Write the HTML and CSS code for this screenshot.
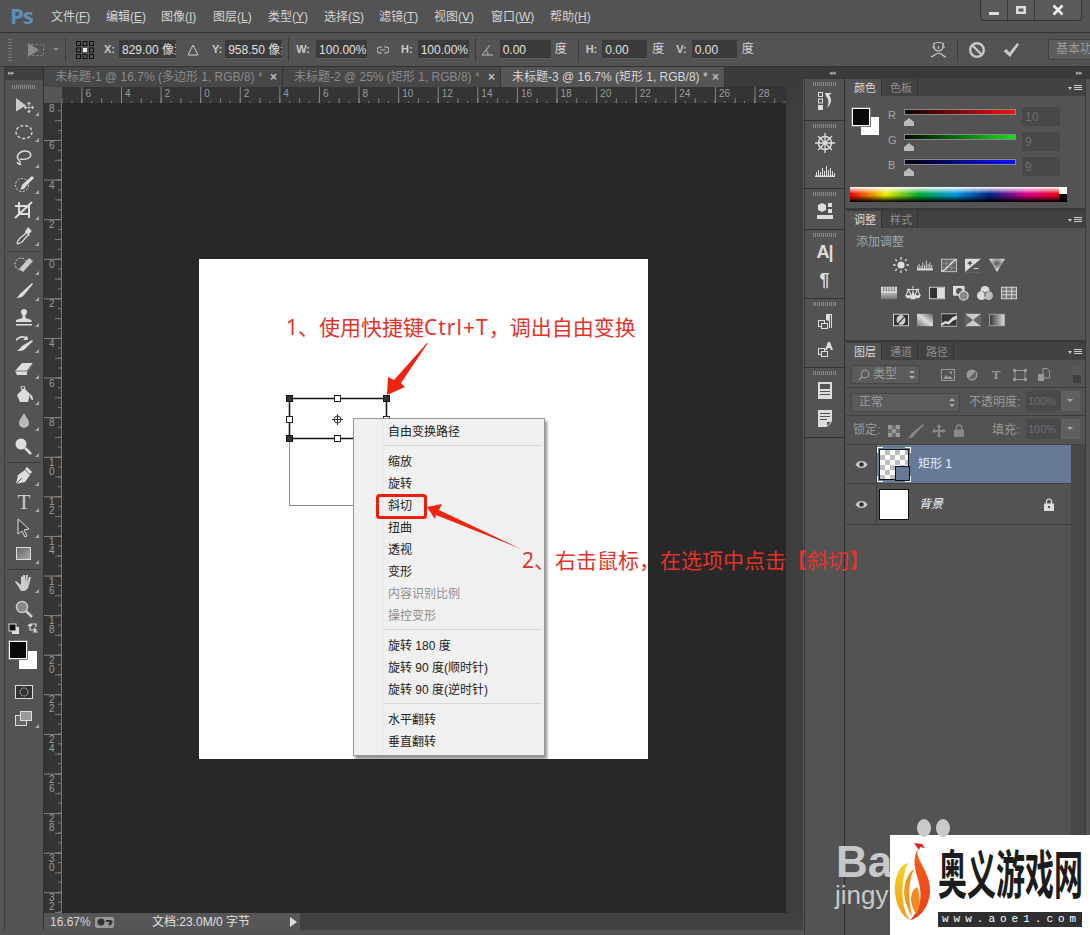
FILE: index.html
```html
<!DOCTYPE html>
<html lang="zh-CN">
<head>
<meta charset="utf-8">
<title>Photoshop</title>
<link rel="stylesheet" href="styles.css">
</head>
<body>
<div class="app">
  <header class="titlebar">
    <div class="logo">Ps</div>
    <nav class="menu">
      <span>文件(<u>F</u>)</span><span>编辑(<u>E</u>)</span><span>图像(<u>I</u>)</span><span>图层(<u>L</u>)</span><span>类型(<u>Y</u>)</span><span>选择(<u>S</u>)</span><span>滤镜(<u>T</u>)</span><span>视图(<u>V</u>)</span><span>窗口(<u>W</u>)</span><span>帮助(<u>H</u>)</span>
    </nav>
    <div class="winbtns">
      <div class="winbtn"><svg width="12" height="12" viewBox="0 0 12 12"><rect x="1" y="8" width="10" height="3" fill="#ddd"/></svg></div>
      <div class="winbtn"><svg width="12" height="12" viewBox="0 0 12 12"><path d="M1 2h10v8H1zM3.500 4.500v3h5v-3z" fill="#ddd" fill-rule="evenodd"/></svg></div>
      <div class="winbtn wide"><svg width="12" height="12" viewBox="0 0 12 12"><path d="M1.500 1.500l9 9M10.500 1.500l-9 9" stroke="#eee" stroke-width="2.600"/></svg></div>
    </div>
  </header>

  <div class="options">
    <div class="grip"></div>
    <svg class="o-tool" width="18" height="16" viewBox="0 0 18 16"><path d="M1 1l11 7-11 7z" fill="#8a8a8a"/><rect x="4.500" y="2.500" width="12" height="11" fill="none" stroke="#8a8a8a" stroke-dasharray="2 2"/></svg>
    <span class="caret"></span>
    <div class="vsep s1"></div>
    <svg class="o-grid" width="20" height="20" viewBox="0 0 20 20"><g fill="none" stroke="#111"><rect x="1.500" y="1.500" width="4" height="4"/><rect x="8" y="1.500" width="4" height="4"/><rect x="14.500" y="1.500" width="4" height="4"/><rect x="1.500" y="8" width="4" height="4"/><rect x="14.500" y="8" width="4" height="4"/><rect x="1.500" y="14.500" width="4" height="4"/><rect x="8" y="14.500" width="4" height="4"/><rect x="14.500" y="14.500" width="4" height="4"/></g><rect x="8" y="8" width="4" height="4" fill="#eee"/></svg>
    <b class="lab l-x">X:</b><span class="inp w57 m-inp">829.00 像素</span>
    <svg class="o-tri" width="12" height="12" viewBox="0 0 12 12"><path d="M6 1l5 10H1z" fill="none" stroke="#ccc"/></svg>
    <b class="lab l-y">Y:</b><span class="inp w57 m-inpy">958.50 像素</span>
    <div class="vsep s2"></div>
    <b class="lab l-w">W:</b><span class="inp w51 m-inp2">100.00%</span>
    <svg class="o-link" width="12" height="8" viewBox="0 0 12 8"><path d="M5 1H3a3 3 0 0 0 0 6h2M7 1h2a3 3 0 0 1 0 6H7M3.500 4h5" fill="none" stroke="#bbb" stroke-width="1.200"/></svg>
    <b class="lab l-h">H:</b><span class="inp w51 m-inp3">100.00%</span>
    <div class="vsep s3"></div>
    <svg class="o-ang" width="13" height="12" viewBox="0 0 13 12"><path d="M1 11h11M1 11L9 1M7 11a6 6 0 0 0-2-5" fill="none" stroke="#bbb"/></svg>
    <span class="inp w51 m-inp4">0.00</span>
    <span class="deg d1">度</span>
    <div class="vsep s4"></div>
    <b class="lab l-h2">H:</b><span class="inp w45 m-inp5">0.00</span>
    <span class="deg d2">度</span>
    <b class="lab l-v">V:</b><span class="inp w45 m-inp6">0.00</span>
    <span class="deg d2">度</span>
    <div class="o-right">
      <svg width="17" height="18" viewBox="0 0 17 18"><path d="M3 3c2-2 9-2 11 0M4 3v3c0 2 2 4 4.500 4S13 8 13 6V3M2 6h3M12 6h3M8.500 5v3M1 16c3-1 5-4 7.500-4s4.500 3 7.500 4" fill="none" stroke="#ccc" stroke-width="1.200"/></svg>
      <div class="vsep s5"></div>
      <svg class="o-cancel" width="18" height="18" viewBox="0 0 18 18"><circle cx="9" cy="9" r="6.800" fill="none" stroke="#c8c8c8" stroke-width="2.400"/><path d="M4.500 4.500l9 9" stroke="#c8c8c8" stroke-width="2.400"/></svg>
      <svg class="o-ok" width="18" height="16" viewBox="0 0 18 16"><path d="M1.500 9l3-2 3 3.500L15 1l2 1.500L8 15z" fill="#c8c8c8"/></svg>
      <div class="workspace-btn">基本功能</div>
    </div>
  </div>

  <div class="work">
    <aside class="tools">
      <div class="collapse"><span class="arrows-mini">▸▸</span></div>
      <div class="handle"></div>
      <div class="tool more"><svg width="22" height="18" viewBox="0 0 22 18"><path d="M3 1l10 7.500-10 6z" fill="#ccc"/><path d="M16 6v9M11.500 10.500h9M16 5l-1.500 2h3zM16 16l-1.500-2h3zM11 10.500l2-1.500v3zM21 10.500l-2-1.500v3z" fill="#ccc" stroke="#ccc" stroke-width=".7"/></svg></div>
      <div class="tool more"><svg width="20" height="18" viewBox="0 0 20 18"><ellipse cx="10" cy="9" rx="8" ry="6.500" fill="none" stroke="#ddd" stroke-width="1.300" stroke-dasharray="3 2"/></svg></div>
      <div class="tool more"><svg width="20" height="18" viewBox="0 0 20 18"><path d="M5 15c2-1 1-3-1-5C2 7 5 2 11 2c5 0 7 3 5 6-2 2-7 3-10 2M3 13c1 2 3 3 4 2" fill="none" stroke="#ddd" stroke-width="1.400"/></svg></div>
      <div class="tool more"><svg width="20" height="18" viewBox="0 0 20 18"><circle cx="8" cy="10" r="6.500" fill="none" stroke="#ddd" stroke-dasharray="2 1.600"/><path d="M18 1l2 2-8 8c-1 3-4 4-6 3 2-1 1-3 3-5z" fill="#ddd"/></svg></div>
      <div class="tool more"><svg width="20" height="18" viewBox="0 0 20 18"><path d="M5 1v12h11M1 5h14v12M1 17L18 1" fill="none" stroke="#ddd" stroke-width="2"/></svg></div>
      <div class="tool more"><svg width="20" height="18" viewBox="0 0 20 18"><path d="M14 1l3 3-3 3 1 1-2 1-5 6-4 2-1-1 2-4 6-5 1-2 1 1z" fill="none" stroke="#ddd" stroke-width="1.200"/><path d="M14 1l3 3-3 3-3-3z" fill="#ddd"/></svg></div>
      <div class="toolsep"></div>
      <div class="tool more"><svg width="20" height="18" viewBox="0 0 20 18"><circle cx="7" cy="8" r="6" fill="none" stroke="#ddd" stroke-dasharray="2 1.600"/><path d="M5 13L15 2l4 3-10 11z" fill="#c8c8c8"/></svg></div>
      <div class="tool more"><svg width="20" height="18" viewBox="0 0 20 18"><path d="M18 1l1 1-9 11c-1 2-4 3-8 3 3-1 3-4 5-5z" fill="#ddd"/></svg></div>
      <div class="tool more"><svg width="20" height="18" viewBox="0 0 20 18"><circle cx="10" cy="4" r="3" fill="#ddd"/><path d="M8.500 6h3v4l6 2v2H2v-2l6.500-2zM2 16h16v1.500H2z" fill="#ddd"/></svg></div>
      <div class="tool more"><svg width="20" height="18" viewBox="0 0 20 18"><path d="M2 5c3-3 7-4 10-2l1-2 1 5-5 0 2-2c-3-1-6 0-9 3z" fill="#ddd"/><path d="M18 6l1 1-8 8c-2 2-5 2-8 2 2-1 3-3 5-5z" fill="#ddd"/></svg></div>
      <div class="tool more"><svg width="20" height="18" viewBox="0 0 20 18"><path d="M8 3h11l-6 9v3H3L1 11z" fill="#ddd"/><path d="M1 11h12l6-8" fill="none" stroke="#777"/></svg></div>
      <div class="tool more"><svg width="20" height="18" viewBox="0 0 20 18"><path d="M3 9l7-7 6 6-2 8H6z" fill="#ddd"/><circle cx="9" cy="2" r="2" fill="none" stroke="#ddd"/><path d="M16 8c2 1 3 3 3 6-2 0-3-2-3-6z" fill="#ddd"/></svg></div>
      <div class="tool more"><svg width="20" height="18" viewBox="0 0 20 18"><path d="M10 1c2 4 5 7 5 10a5 5 0 0 1-10 0c0-3 3-6 5-10z" fill="#bbb"/></svg></div>
      <div class="tool more"><svg width="20" height="18" viewBox="0 0 20 18"><circle cx="7" cy="6" r="5.500" fill="#ddd"/><path d="M11 10l6 6" stroke="#ddd" stroke-width="2.500"/></svg></div>
      <div class="toolsep"></div>
      <div class="tool more"><svg width="20" height="18" viewBox="0 0 20 18"><path d="M2 17l2-9 7-5 5 5-5 7z" fill="#ddd"/><path d="M2 17l6-6" stroke="#555"/><path d="M12 1l5 5" stroke="#ddd" stroke-width="3"/></svg></div>
      <div class="tool more"><span class="t-glyph">T</span></div>
      <div class="tool more"><svg width="20" height="20" viewBox="0 0 20 20"><path d="M4 1l11 10-5 1 3 6-2 1-3-6-4 3z" fill="#444" stroke="#ddd"/></svg></div>
      <div class="tool more"><svg width="16" height="14" viewBox="0 0 16 14"><defs><linearGradient id="rg" x1="0" y1="0" x2="1" y2="1"><stop offset="0" stop-color="#666"/><stop offset="1" stop-color="#aaa"/></linearGradient></defs><rect x=".5" y=".5" width="14" height="12" fill="url(#rg)" stroke="#ddd"/></svg></div>
      <div class="toolsep"></div>
      <div class="tool more"><svg width="20" height="18" viewBox="0 0 20 18"><path d="M2 7l5 4V3l1-1 1 1v5-7h2v7l1-7h2l-1 8 2-6h2l-2 8c-1 4-3 6-6 6S6 15 4 12L1 8z" fill="#ccc"/></svg></div>
      <div class="tool"><svg width="20" height="18" viewBox="0 0 20 18"><circle cx="8" cy="7" r="5.500" fill="#888" stroke="#ccc" stroke-width="1.400"/><path d="M12 11l6 6" stroke="#ccc" stroke-width="2.500"/></svg></div>
      <div class="miniswap">
        <svg width="12" height="12" viewBox="0 0 12 12"><rect x="4" y="4" width="7" height="7" fill="#ddd"/><rect x="1" y="1" width="7" height="7" fill="#111" stroke="#ddd"/></svg>
        <svg width="12" height="12" viewBox="0 0 12 12"><path d="M3 1v6h6M1 3l2-2 2 2M7 5l2 2-2 2M4 1h5v3M11 9H6" fill="none" stroke="#ddd" stroke-width="1.200"/></svg>
      </div>
      <div class="swatch tool-swatch"><span class="bg"></span><span class="fg"></span></div>
      <div class="tool mask"><svg width="18" height="14" viewBox="0 0 18 14"><rect x=".5" y=".5" width="17" height="13" fill="#333" stroke="#ddd"/><circle cx="9" cy="7" r="4" fill="none" stroke="#ddd" stroke-dasharray="1.500 1"/></svg></div>
      <div class="tool more"><svg width="20" height="16" viewBox="0 0 20 16"><rect x="1.500" y="5.500" width="11" height="10" fill="#666" stroke="#ddd"/><rect x="6.500" y="1.500" width="11" height="9" fill="#999" stroke="#ddd"/></svg></div>
    </aside>

    <main class="docarea">
      <div class="tabs">
        <div class="tab t1"><span>未标题-1 @ 16.7% (多边形 1, RGB/8) *</span><i>×</i></div>
        <div class="tab t2"><span>未标题-2 @ 25% (矩形 1, RGB/8) *</span><i>×</i></div>
        <div class="tab t3 active"><span>未标题-3 @ 16.7% (矩形 1, RGB/8) *</span><i>×</i></div>
      </div>
      <div class="rulerrow">
        <div class="corner"></div>
        <div class="ruler-h">
          <span>6</span><span>4</span><span>2</span><span>0</span><span>2</span><span>4</span><span>6</span><span>8</span><span>10</span><span>12</span><span>14</span><span>16</span><span>18</span><span>20</span><span>22</span><span>24</span><span>26</span><span>28</span>
        </div>
        <div class="rulergap"></div>
      </div>
      <div class="mainrow">
        <div class="ruler-v">
          <span>8</span><span>6</span><span>4</span><span>2</span><span>0</span><span>2</span><span>4</span><span>6</span><span>8</span><span>1<br>0</span><span>1<br>2</span><span>1<br>4</span><span>1<br>6</span><span>1<br>8</span><span>2<br>0</span><span>2<br>2</span><span>2<br>4</span><span>2<br>6</span><span>2<br>8</span><span>3<br>0</span><span>3<br>2</span>
        </div>
        <div class="viewport">
          <div class="page"></div>
          <svg class="overlay" viewBox="62 103 724 810" width="724" height="810">
            <path d="M289.500 438v67.500h100" fill="none" stroke="#888" stroke-width="1"/>
            <path d="M289.500 398.500h97v40h-97z" fill="none" stroke="#111" stroke-width="1.500"/>
            <g fill="#333" stroke="#111"><rect x="286.500" y="395.500" width="6" height="6"/><rect x="383.500" y="395.500" width="6" height="6"/><rect x="286.500" y="435.500" width="6" height="6"/></g>
            <g fill="#fff" stroke="#222"><rect x="334.500" y="395.500" width="6" height="6"/><rect x="334.500" y="435.500" width="6" height="6"/><rect x="286.500" y="416.500" width="6" height="6"/><rect x="383.500" y="416.500" width="6" height="6"/></g>
            <g fill="none" stroke="#333"><circle cx="337.500" cy="419.500" r="3.500"/><path d="M337.500 414v11M332 419.500h11"/></g>
          </svg>
          <div class="ctxmenu">
            <div class="mi">自由变换路径</div>
            <div class="ms"></div>
            <div class="mi">缩放</div>
            <div class="mi">旋转</div>
            <div class="mi">斜切</div>
            <div class="mi">扭曲</div>
            <div class="mi">透视</div>
            <div class="mi">变形</div>
            <div class="mi off">内容识别比例</div>
            <div class="mi off">操控变形</div>
            <div class="ms"></div>
            <div class="mi">旋转 180 度</div>
            <div class="mi">旋转 90 度(顺时针)</div>
            <div class="mi">旋转 90 度(逆时针)</div>
            <div class="ms"></div>
            <div class="mi">水平翻转</div>
            <div class="mi">垂直翻转</div>
          </div>
          <svg class="overlay" viewBox="62 103 724 810" width="724" height="810">
            <g fill="#f0240f">
              <path d="M428 343L401 383l4 4-18 8 1-18 6 3 33-37z"/>
              <path d="M427 507l15-3-3 6 82 39-85-34-1 4z"/>
            </g>
            <rect x="377.500" y="495.500" width="48" height="22" rx="2" fill="none" stroke="#ee1c0c" stroke-width="3"/>
          </svg>
        </div>
        <div class="vscroll"></div>
      </div>
      <div class="statusrow">
        <div class="status">
          <span class="zoomval">16.67%</span>
          <span class="st-ico"><svg width="18" height="10" viewBox="0 0 18 10"><circle cx="5" cy="5" r="3.500" fill="#333"/><path d="M10 3h5l2 2-3 4-2-2 2-2h-4z" fill="#333"/></svg></span>
          <span class="docinfo">文档:23.0M/0 字节</span>
          <span class="st-play"></span>
        </div>
        <div class="hscroll"></div>
      </div>
    </main>

    <div class="dockwrap">
      <div class="dockhead"><span>◂◂</span><span>▸▸</span></div>
      <div class="dockbody">
        <div class="dock">
          <div class="dg g1"><div class="handle sm"></div>
            <div class="di"><svg width="16" height="20" viewBox="0 0 16 20"><g fill="none" stroke="#ddd"><rect x="1.500" y="1.500" width="4" height="4"/><rect x="1.500" y="8" width="4" height="4"/></g><rect x="1" y="14" width="5" height="5" fill="#ddd"/><path d="M8 2h7l-3 2c3 4 3 8-2 13 2-5 2-9-1-12z" fill="#ddd"/></svg></div>
          </div>
          <div class="dg g2"><div class="handle sm"></div>
            <div class="di"><svg width="20" height="20" viewBox="0 0 20 20"><circle cx="10" cy="10" r="6.500" fill="none" stroke="#ddd" stroke-width="1.500"/><path d="M10 0v20M0 10h20M3 3l14 14M17 3L3 17" stroke="#ddd" stroke-width="1.300"/></svg></div>
            <div class="di"><svg width="20" height="12" viewBox="0 0 20 12"><path d="M1.500 12V7M3.500 12V5M5.500 12V7M7.500 12V3M9.500 12V6M11.500 12V1M13.500 12V5M15.500 12V3M17.500 12V6M19.500 12V8" stroke="#ddd"/><path d="M0 10.500h20V12H0z" fill="#ddd"/></svg></div>
          </div>
          <div class="dg g3"><div class="handle sm"></div>
            <div class="di"><svg width="16" height="18" viewBox="0 0 16 18"><path d="M1 3l4-2 4 2v5l-4 2-4-2z" fill="#ddd"/><rect x="11" y="1" width="4" height="4" fill="#ddd"/><rect x="11" y="7" width="4" height="4" fill="#ddd"/><rect y="13" width="16" height="4" fill="#ddd"/></svg></div>
          </div>
          <div class="dg g4"><div class="handle sm"></div>
            <div class="di"><span class="a-glyph">A|</span></div>
            <div class="di"><span class="p-glyph">¶</span></div>
          </div>
          <div class="dg g5"><div class="handle sm"></div>
            <div class="di"><span class="combo"><svg width="16" height="16" viewBox="0 0 16 16"><rect x="1.500" y="7.500" width="6" height="6" fill="none" stroke="#ddd"/><rect x="4.500" y="10.500" width="6" height="5" fill="#555" stroke="#ddd"/><path d="M9 7V1h6v14h-1V2h-1v13h-1V8z" fill="#ddd"/></svg></span></div>
            <div class="di"><svg width="16" height="16" viewBox="0 0 16 16"><rect x="1.500" y="7.500" width="6" height="6" fill="none" stroke="#ddd"/><rect x="4.500" y="10.500" width="6" height="5" fill="#555" stroke="#ddd"/><path d="M8 9l3-8h2l3 8h-2l-1-2h-2l-1 2z" fill="#ddd"/></svg></div>
          </div>
          <div class="dg g6"><div class="handle sm"></div>
            <div class="di"><svg width="14" height="17" viewBox="0 0 14 17"><path d="M0 0h14v17H0zM2 2v5h10V2zM2 9v1h10V9zM2 12v1h10v-1z" fill="#ddd" fill-rule="evenodd"/></svg></div>
            <div class="di"><svg width="14" height="17" viewBox="0 0 14 17"><path d="M0 0h14v11l-6 6H0zM2 3v1h10V3zM2 6v1h10V6zM2 9v1h7V9zM14 12l-5 5v-5z" fill="#ddd" fill-rule="evenodd"/></svg></div>
          </div>
        </div>

        <div class="panels">
          <section class="panel p-color">
            <div class="ptabs"><span class="ptab on">颜色</span><span class="ptab">色板</span><span class="pmenu"><i></i></span></div>
            <div class="colorbody">
              <div class="color-top">
                <div class="swatch panel-swatch"><span class="bg"></span><span class="fg"></span></div>
                <div class="sliders">
                  <div class="sl"><span class="sl-l">R</span><div class="track"><div class="bar red"></div><em></em></div><span class="val">10</span></div>
                  <div class="sl"><span class="sl-l">G</span><div class="track"><div class="bar green"></div><em></em></div><span class="val">9</span></div>
                  <div class="sl"><span class="sl-l">B</span><div class="track"><div class="bar blue"></div><em></em></div><span class="val">9</span></div>
                </div>
              </div>
              <div class="spectrum"><div class="spec"></div><div class="bw"></div></div>
            </div>
          </section>
          <section class="panel p-adj">
            <div class="ptabs"><span class="ptab on">调整</span><span class="ptab">样式</span><span class="pmenu"><i></i></span></div>
            <div class="adjtitle">添加调整</div>
            <div class="adjrow r1">
              <svg class="ai" viewBox="0 0 18 18"><circle cx="9" cy="9" r="4" fill="#ddd"/><path d="M9 0v3M9 15v3M0 9h3M15 9h3M2.500 2.500l2 2M13.500 13.500l2 2M15.500 2.500l-2 2M4.500 13.500l-2 2" stroke="#ddd" stroke-width="1.500"/></svg>
              <svg class="ai" viewBox="0 0 18 18"><path d="M.5 15v-5M2.500 15V8M4.500 15v-5M6.500 15V6M8.500 15V9M10.500 15V4M12.500 15V8M14.500 15V6M16.500 15V9" stroke="#ddd"/><path d="M0 13h18v2H0z" fill="#ddd"/></svg>
              <svg class="ai" viewBox="0 0 18 18"><rect x=".5" y="2.500" width="17" height="14" fill="#666" stroke="#ccc"/><path d="M6 2v15M12 2v15M0 7h18M0 12h18" stroke="#999" stroke-width=".7"/><path d="M1 16C7 15 11 5 17 3" fill="none" stroke="#eee" stroke-width="1.300"/></svg>
              <svg class="ai" viewBox="0 0 18 18"><rect y="2" width="18" height="15" fill="#ddd"/><path d="M0 17L18 2v15z" fill="#555"/><path d="M3 7h5M5.500 4.500v5" stroke="#333" stroke-width="1.400"/><path d="M10 13h5" stroke="#eee"/></svg>
              <svg class="ai" viewBox="0 0 18 18"><defs><radialGradient id="vg" cy=".35"><stop offset="0" stop-color="#555"/><stop offset="1" stop-color="#ddd"/></radialGradient></defs><path d="M0 2h18L9 17z" fill="url(#vg)"/></svg>
            </div>
            <div class="adjrow r2">
              <svg class="ai" viewBox="0 0 18 18"><defs><linearGradient id="hs" x1="0" y1="0" x2="0" y2="1"><stop offset="0" stop-color="#eee"/><stop offset="1" stop-color="#777"/></linearGradient></defs><rect y="2" width="18" height="14" fill="url(#hs)"/><path d="M0 8h18" stroke="#ddd" stroke-width="2"/><path d="M3 2v5M6 2v5M9 2v5M12 2v5M15 2v5" stroke="#666"/></svg>
              <svg class="ai" viewBox="0 0 18 18"><path d="M9 1v3M2 5h14M4 5l-3 7h6zM14 5l-3 7h6z" fill="none" stroke="#ddd" stroke-width="1.200"/><path d="M1 12a3 3 0 0 0 6 0zM11 12a3 3 0 0 0 6 0z M6 16h6l-3-11z" fill="#ddd"/></svg>
              <svg class="ai" viewBox="0 0 18 18"><rect x=".5" y="2.500" width="17" height="13" fill="#333" stroke="#ddd"/><rect x="9" y="3" width="8" height="12" fill="#ddd"/></svg>
              <svg class="ai" viewBox="0 0 18 18"><rect y="1" width="13" height="11" fill="#ddd"/><circle cx="7" cy="7" r="3.500" fill="#555"/><circle cx="12" cy="12" r="5" fill="#888" stroke="#ddd" stroke-width="1.300"/></svg>
              <svg class="ai" viewBox="0 0 18 18"><circle cx="9" cy="6" r="5" fill="#ddd"/><circle cx="5" cy="12" r="5" fill="#ddd"/><circle cx="13" cy="12" r="5" fill="#bbb"/><path d="M9 9v4M9 9l-3-2M9 9l3-2" stroke="#555"/></svg>
              <svg class="ai" viewBox="0 0 18 18"><rect x=".5" y="2.500" width="17" height="13" fill="#777" stroke="#ddd"/><path d="M6 2v14M12 2v14M0 7h18M0 11h18" stroke="#ddd"/></svg>
            </div>
            <div class="adjrow r3">
              <svg class="ai" viewBox="0 0 18 18"><rect x=".5" y="2.500" width="17" height="13" fill="#333" stroke="#ddd"/><ellipse cx="9" cy="9" rx="5" ry="5.500" fill="#ccc"/><path d="M4 14C8 12 11 7 14 4" stroke="#333" stroke-width="1.200"/></svg>
              <svg class="ai" viewBox="0 0 18 18"><defs><linearGradient id="ps" x1="0" y1="1" x2="1" y2="0"><stop offset="0" stop-color="#777"/><stop offset=".5" stop-color="#ddd"/><stop offset="1" stop-color="#666"/></linearGradient></defs><rect y="2" width="18" height="14" fill="url(#ps)"/></svg>
              <svg class="ai" viewBox="0 0 18 18"><rect y="2" width="18" height="14" fill="#333"/><path d="M0 13l5-3 3 1 5-5 5-2v4l-5 2-4 4-4-1-5 3z" fill="#ddd"/><path d="M0 2h18v14H0z" fill="none" stroke="#ccc"/></svg>
              <svg class="ai" viewBox="0 0 18 18"><rect y="2" width="18" height="14" fill="#ccc"/><path d="M0 2l9 7-9 7zM18 2L9 9l9 7z" fill="#666"/></svg>
              <svg class="ai" viewBox="0 0 18 18"><defs><linearGradient id="gm"><stop offset="0" stop-color="#333"/><stop offset="1" stop-color="#ddd"/></linearGradient></defs><rect x=".5" y="2.500" width="17" height="13" fill="url(#gm)" stroke="#aaa"/></svg>
            </div>
          </section>
          <section class="panel p-layers">
            <div class="ptabs"><span class="ptab on">图层</span><span class="ptab">通道</span><span class="ptab">路径</span><span class="pmenu"><i></i></span></div>
            <div class="lrow filter">
              <div class="sel sel-filter"><svg width="12" height="12" viewBox="0 0 12 12"><circle cx="7" cy="5" r="3.800" fill="none" stroke="#999" stroke-width="1.200"/><path d="M4 8l-3 3" stroke="#999" stroke-width="1.400"/></svg><span>类型</span><i class="updown"></i></div>
              <div class="f-icons">
                <svg width="14" height="12" viewBox="0 0 14 12"><rect x=".5" y=".5" width="13" height="11" fill="none" stroke="#999"/><path d="M2 10l3-4 2 2 2-1 3 3z" fill="#999"/><circle cx="10" cy="3.500" r="1.300" fill="#999"/></svg>
                <svg width="12" height="12" viewBox="0 0 12 12"><circle cx="6" cy="6" r="5.500" fill="#999"/><path d="M2 10L10 2v4a4 4 0 0 1-4 4z" fill="#666"/></svg>
                <span class="f-t">T</span>
                <svg width="14" height="12" viewBox="0 0 14 12"><rect x="2" y="1.500" width="10" height="9" fill="none" stroke="#999"/><g fill="#999"><rect width="3" height="3"/><rect x="11" width="3" height="3"/><rect y="9" width="3" height="3"/><rect x="11" y="9" width="3" height="3"/></g></svg>
                <svg width="12" height="13" viewBox="0 0 12 13"><path d="M5 .5h4l2.500 2.500v7H5z" fill="none" stroke="#999"/><rect y="6" width="6" height="7" fill="#999"/></svg>
              </div>
              <div class="f-toggle"></div>
            </div>
            <div class="lrow mode">
              <div class="sel sel-mode"><span>正常</span><i class="updown"></i></div>
              <span class="l-lab lab-op">不透明度:</span>
              <div class="pct"><span>100%</span><i></i></div>
            </div>
            <div class="lrow lock">
              <span class="l-lab lab-lock">锁定:</span>
              <div class="lock-icons">
                <svg width="12" height="12" viewBox="0 0 12 12"><rect width="12" height="12" fill="#6e6e6e"/><path d="M0 0h4v4H0zM8 0h4v4H8zM4 4h4v4H4zM0 8h4v4H0zM8 8h4v4H8z" fill="#999"/></svg>
                <svg width="16" height="14" viewBox="0 0 16 14"><path d="M15 0l1 1-8 8-3 4c-1 1-3 1-5 1 2-1 2-3 4-5z" fill="#888"/></svg>
                <svg width="14" height="14" viewBox="0 0 14 14"><path d="M7 0l2.500 3H8v3h3V4.500L14 7l-3 2.500V8H8v3h1.500L7 14l-2.500-3H6V8H3v1.500L0 7l3-2.500V6h3V3H4.500z" fill="#888"/></svg>
                <svg width="10" height="13" viewBox="0 0 10 13"><path d="M2.500 6V3.500a2.500 2.500 0 0 1 5 0V6" fill="none" stroke="#888" stroke-width="1.300"/><rect y="5.500" width="10" height="7.500" fill="#888"/></svg>
              </div>
              <span class="l-lab lab-fill">填充:</span>
              <div class="pct"><span>100%</span><i></i></div>
            </div>
            <div class="layerlist">
              <div class="layers">
                <div class="layer sel-layer">
                  <div class="eye"><svg width="13" height="9" viewBox="0 0 13 9"><path d="M.5 4.500C2 2 4 1 6.500 1s4.500 1 6 3.500C11 7 9 8 6.500 8S2 7 .5 4.500z" fill="#ccc"/><circle cx="6.500" cy="4.500" r="2.300" fill="#333"/></svg></div>
                  <div class="thumb shape"><span class="br tl"></span><span class="br tr"></span><span class="br bl"></span><span class="br brr"></span><span class="vec"></span></div>
                  <span class="lname">矩形 1</span>
                </div>
                <div class="layer second">
                  <div class="eye"><svg width="13" height="9" viewBox="0 0 13 9"><path d="M.5 4.500C2 2 4 1 6.500 1s4.500 1 6 3.500C11 7 9 8 6.500 8S2 7 .5 4.500z" fill="#ccc"/><circle cx="6.500" cy="4.500" r="2.300" fill="#333"/></svg></div>
                  <div class="thumb"></div>
                  <span class="lname ital">背景</span>
                  <svg class="llock" width="10" height="13" viewBox="0 0 10 13"><path d="M2.500 6V3.500a2.500 2.500 0 0 1 5 0V6" fill="none" stroke="#ddd" stroke-width="1.200"/><path d="M0 5.500h10V13H0zM4 8v2h2V8z" fill="#ddd" fill-rule="evenodd"/></svg>
                </div>
              </div>
              <div class="layerscroll"></div>
            </div>
          </section>
        </div>
      </div>
    </div>
  </div>
</div>

<div class="note n1">1、使用快捷键<span class="latin">Ctrl+T</span>，调出自由变换</div>
<div class="note n2">2、右击鼠标，在选项中点击【斜切】</div>

<div class="baidu">
  <div class="ba">Ba</div>
  <div class="jy">jingy</div>
</div>
<div class="aoe">
  <svg class="phoenix" width="42" height="84" viewBox="0 0 42 84">
    <defs>
      <linearGradient id="ph1" x1="0" y1="0" x2="0" y2="1"><stop offset="0" stop-color="#f8d020"/><stop offset="1" stop-color="#f0a020"/></linearGradient>
      <linearGradient id="ph2" x1="0" y1="0" x2="0" y2="1"><stop offset="0" stop-color="#f4621c"/><stop offset="1" stop-color="#e8401c"/></linearGradient>
    </defs>
    <path d="M21 2l8 1 3 4-5-1-1 3z" fill="#d9201a"/>
    <path d="M25 7c-4 10 11 22 12 40 1 16-9 30-20 32 8-8 12-18 10-32-2-14-10-24-2-40z" fill="url(#ph2)"/>
    <path d="M15 22C6 24 1 38 2 52c1 12 7 24 15 27C9 70 6 42 15 22z" fill="url(#ph1)"/>
    <path d="M21 28c-9 6-12 22-8 34 2 6 4 12 6 13-3-14-5-32 2-47z" fill="#f0981e"/>
    <path d="M24 46c-6 3-7 12-5 18 1 4 3 8 5 9 3-8 4-20 0-27z" fill="#f08a1e"/>
  </svg>
  <div class="aoe-r">
    <div class="aoe-title"><span>奥义游戏网</span></div>
    <div class="aoe-url">www.aoe1.com</div>
  </div>
</div>
</body>
</html>
```

FILE: styles.css
```css
* { box-sizing: border-box; }
html, body { margin: 0; padding: 0; }
svg { flex: none; }
body {
  width: 1090px; height: 935px; overflow: hidden; position: relative;
  background: #535353; color: #cfcfcf;
  font: 12px/1.2 "Liberation Sans", "Noto Sans CJK SC", sans-serif;
}
.app { display: flex; flex-direction: column; height: 935px; }

/* title bar */
.titlebar { height: 33px; display: flex; align-items: flex-start; border-bottom: 1px solid #333; background: #535353; flex: none; }
.logo { width: 51px; flex: none; padding: 2px 0 0 10px; font: bold 22px/26px "Open Sans", sans-serif; color: #5b8fb9; letter-spacing: -1px; }
.menu { display: grid; grid-template-columns: 55px 55px 52px 55px 56px 55px 55px 57px 59px 50px; padding-top: 9px; color: #d4d4d4; font-size: 12px; line-height: 16px; white-space: nowrap; }
.menu span { display: block; }
.winbtns { margin-left: auto; margin-right: 8px; display: flex; height: 21px; border: 1px solid #333; border-top: 0; border-radius: 0 0 4px 4px; background: #5a5a5a; }
.winbtn { width: 27px; display: flex; align-items: center; justify-content: center; border-right: 1px solid #3c3c3c; }
.winbtn.wide { width: 46px; border-right: 0; }

/* options */
.options { height: 34px; flex: none; display: flex; align-items: center; border-bottom: 1px solid #333; position: relative; }
.grip { width: 4px; height: 22px; margin-left: 8px; background: repeating-linear-gradient(180deg, #777 0 1px, transparent 1px 3px); }
.o-tool { margin-left: 15px; }
.caret { margin-left: 8px; width: 0; height: 0; border: 3px solid transparent; border-top: 3px solid #888; margin-top: 3px; }
.vsep { width: 1px; height: 24px; background: #3c3c3c; flex: none; }
.s1 { margin-left: 6px; }
.o-grid { margin-left: 9px; }
.lab { font-weight: bold; color: #c8c8c8; font-size: 11px; flex: none; }
.l-x { margin-left: 9px; }
.inp { height: 19px; background: #3b3b3b; color: #e0e0e0; font-size: 12px; line-height: 20px; padding-left: 3px; overflow: hidden; white-space: nowrap; flex: none; border-bottom: 1px solid #5e5e5e; }
.w57 { width: 57px; }
.w51 { width: 51px; }
.w45 { width: 45px; }
.m-inp { margin-left: 4px; }
.m-inpy { margin-left: 3px; }
.o-tri { margin-left: 11px; }
.l-y { margin-left: 13px; }
.s2 { margin-left: 6px; }
.l-w { margin-left: 7px; }
.m-inp2 { margin-left: 6px; }
.o-link { margin-left: 10px; }
.l-h { margin-left: 12px; }
.m-inp3 { margin-left: 5px; }
.s3 { margin-left: 6px; }
.o-ang { margin-left: 5px; }
.m-inp4 { margin-left: 6px; }
.deg { font-size: 12px; color: #d4d4d4; flex: none; }
.d1 { margin-left: 4px; }
.d2 { margin-left: 5px; }
.s4 { margin-left: 11px; }
.l-h2 { margin-left: 7px; }
.m-inp5 { margin-left: 5px; }
.l-v { margin-left: 12px; }
.m-inp6 { margin-left: 5px; }
.o-right { position: absolute; left: 930px; top: 0; height: 33px; width: 160px; display: flex; align-items: center; overflow: hidden; }
.s5 { margin-left: 10px; }
.o-cancel { margin-left: 10px; }
.o-ok { margin-left: 16px; }
.workspace-btn { margin-left: 28px; flex: none; height: 21px; width: 60px; background: #5d5d5d; border: 1px solid #404040; border-radius: 2px; color: #999; padding-left: 7px; line-height: 19px; white-space: nowrap; overflow: hidden; }

/* working area */
.work { flex: 1; display: flex; min-height: 0; }
.tools { flex: none; margin-left: 4px; width: 40px; border-left: 1px solid #3c3c3c; border-right: 1px solid #2e2e2e; background: #535353; height: 863px; display: flex; flex-direction: column; }
.collapse { height: 13px; background: #3f3f3f; color: #aaa; font-size: 7px; line-height: 12px; padding-left: 3px; }
.arrows-mini { letter-spacing: -1px; }
.handle { height: 13px; background: repeating-linear-gradient(90deg, #8a8a8a 0 1px, transparent 1px 2px) center / 24px 4px no-repeat; }
.handle.sm { height: 10px; flex: none; }
.tool { height: 26px; flex: none; display: flex; align-items: center; justify-content: center; position: relative; }
.tool.more::after { content: ""; position: absolute; right: 4px; bottom: 3px; border: 2px solid transparent; border-right-color: #aaa; border-bottom-color: #aaa; }
.toolsep { height: 3px; flex: none; border-bottom: 1px solid #3a3a3a; margin: 0 2px; }
.t-glyph { font: 21px/1 "Liberation Serif", serif; color: #ccc; }
.miniswap { height: 14px; flex: none; display: flex; justify-content: space-between; padding: 1px 4px 0 3px; }
.swatch { position: relative; flex: none; }
.swatch .bg { position: absolute; background: #fff; }
.swatch .fg { position: absolute; background: #0a0909; border: 1px solid #fff; outline: 1px solid #777; }
.tool-swatch { height: 42px; margin-top: 5px; }
.tool-swatch .fg { left: 4px; top: 0; width: 18px; height: 18px; }
.tool-swatch .bg { left: 14px; top: 10px; width: 18px; height: 18px; }
.tool.mask { height: 26px; margin-top: -4px; }

/* document */
.docarea { width: 759px; flex: none; display: flex; flex-direction: column; height: 863px; }
.tabs { height: 20px; flex: none; display: flex; background: #3b3b3b; }
.tab { display: flex; align-items: center; justify-content: space-between; background: #474747; color: #8b8b8b; padding: 0 5px 0 11px; border-right: 1px solid #333; font-size: 12px; white-space: nowrap; }
.tab i { font-style: normal; font-weight: bold; color: #bbb; font-size: 12px; }
.t1 { width: 239px; }
.t2 { width: 218px; }
.t3 { width: 224px; }
.tab.active { background: #565656; color: #d8d8d8; }
.rulerrow { height: 16px; flex: none; display: flex; }
.corner { width: 18px; background: #565656; }
.ruler-h {
  width: 724px; position: relative; display: flex; padding-left: 19.400px; overflow: hidden; background-color: #343434;
  background-image: linear-gradient(90deg, #858585 1px, transparent 1px), linear-gradient(90deg, #777 1px, transparent 1px), linear-gradient(90deg, #777 1px, transparent 1px);
  background-size: 39.600px 100%, 19.800px 5px, 9.900px 2px;
  background-position: 19.400px 0, 19.400px 100%, 19.400px 100%;
  background-repeat: repeat-x;
  color: #9c9c9c; font-size: 10px; line-height: 13px;
}
.ruler-h span { flex: 0 0 39.600px; padding-left: 4px; }
.rulergap { flex: 1; background: #3c3c3c; }
.mainrow { flex: 1; display: flex; min-height: 0; }
.ruler-v {
  width: 18px; flex: none; overflow: hidden; background-color: #343434; position: relative;
  background-image: linear-gradient(180deg, #858585 1px, transparent 1px), linear-gradient(180deg, #777 1px, transparent 1px), linear-gradient(180deg, #777 1px, transparent 1px);
  background-size: 100% 39.600px, 6px 19.800px, 3px 9.900px;
  background-position: 0 -2.600px, 100% -2.600px, 100% -2.600px;
  background-repeat: repeat-y;
  border-right: 1px solid #777;
  color: #9c9c9c; font-size: 10px; line-height: 9px;
}
.ruler-v span { display: block; height: 39.600px; padding: 1px 0 0 5px; }
.ruler-v span:first-child { height: 37px; }
.viewport { width: 724px; flex: none; background: #282828; position: relative; overflow: hidden; }
.page { width: 449px; height: 500px; background: #fff; margin: 156px 0 0 137px; }
.overlay { position: absolute; left: 0; top: 0; }
.vscroll { flex: 1; background: #3e3e3e; }
.ctxmenu {
  position: absolute; left: 291px; top: 315px; width: 192px; padding: 1px 1px 3px; color: #222; font-size: 12px;
  background: linear-gradient(90deg, #f0f0f0 28px, #e2e3e3 28px, #e2e3e3 29px, #f0f0f0 29px);
  border: 1px solid #979797; box-shadow: 2px 3px 3px rgba(0,0,0,.45);
}
.mi { height: 22px; line-height: 24px; padding-left: 33px; white-space: nowrap; }
.mi.off { color: #8e8e8e; }
.ms { height: 8px; margin-left: 29px; margin-right: 2px; background: linear-gradient(#d7d7d7, #d7d7d7) 0 3px / 100% 1px no-repeat; }
.note { position: absolute; color: #e4322b; font: 21px/28px "Noto Sans", "Noto Sans CJK SC", sans-serif; white-space: nowrap; }
.n1 { left: 286px; top: 313px; }
.n2 { left: 522px; top: 546px; }
.latin { letter-spacing: 1px; }
.statusrow { height: 17px; flex: none; display: flex; }
.status { width: 256px; background: #565656; display: flex; align-items: center; font-size: 12px; position: relative; padding-top: 1px; }
.zoomval { margin-left: 6px; width: 45px; color: #d8d8d8; }
.st-ico { width: 19px; height: 11px; background: #999; border-radius: 2px; display: flex; align-items: center; justify-content: center; }
.docinfo { margin-left: 38px; color: #e0e0e0; white-space: nowrap; }
.st-play { position: absolute; left: 246px; top: 4px; border-left: 7px solid #ddd; border-top: 5px solid transparent; border-bottom: 5px solid transparent; }
.hscroll { flex: 1; background: #414141; }

/* dock + panels */
.dockwrap { flex: 1; display: flex; flex-direction: column; min-width: 0; }
.dockhead { height: 12px; flex: none; background: #3a3a3a; display: flex; justify-content: space-between; color: #aaa; font-size: 7px; line-height: 11px; padding: 0 8px 0 26px; letter-spacing: -1px; }
.dockbody { flex: 1; display: flex; min-height: 0; }
.dock { width: 41px; flex: none; margin-left: 1px; border-left: 1px solid #3a3a3a; border-right: 1px solid #2e2e2e; }
.dg { border-bottom: 1px solid #333; }
.g1 { height: 42px; }
.g2 { height: 68px; }
.g3 { height: 41px; }
.g4 { height: 69px; }
.g5 { height: 69px; }
.g6 { height: 70px; }
.di { height: 24px; display: flex; align-items: center; justify-content: center; }
.di + .di { margin-top: 4px; }
.a-glyph { font: bold 18px/1 "Liberation Sans", sans-serif; color: #ddd; letter-spacing: -1px; }
.p-glyph { font: bold 18px/1 "Liberation Sans", sans-serif; color: #ddd; }
.combo { display: flex; }
.panels { width: 240px; flex: none; margin-left: 1px; display: flex; flex-direction: column; border-right: 1px solid #3a3a3a; height: 851px; }
.panel { flex: none; border-bottom: 3px solid #3a3a3a; }
.p-color { height: 132px; }
.p-adj { height: 132px; }
.p-layers { flex: 1; border-bottom: 0; display: flex; flex-direction: column; min-height: 0; }
.ptabs { height: 17px; flex: none; display: flex; background: #424242; position: relative; }
.ptab { width: 36px; padding-left: 8px; color: #8f8f8f; font-size: 11px; line-height: 19px; border-right: 1px solid #333; white-space: nowrap; }
.ptab.on { background: #535353; color: #d8d8d8; }
.pmenu { position: absolute; right: 3px; top: 6px; width: 12px; height: 6px; background: repeating-linear-gradient(180deg, #ccc 0 1px, transparent 1px 2px) 4px 0 / 8px 6px no-repeat; }
.pmenu i { position: absolute; left: -2px; top: 2px; border: 2px solid transparent; border-top: 3px solid #ccc; }

.colorbody { padding: 11px 0 0 4px; height: 112px; }
.color-top { display: flex; height: 80px; }
.panel-swatch { width: 31px; height: 40px; flex: none; }
.panel-swatch .fg { left: 2px; top: 1px; width: 18px; height: 18px; }
.panel-swatch .bg { left: 11px; top: 10px; width: 18px; height: 18px; }
.sliders { margin-left: 7px; width: 180px; }
.sl { height: 25px; display: flex; position: relative; }
.sl-l { width: 16px; color: #a8a8a8; font-size: 11px; padding-top: 2px; flex: none; }
.track { width: 112px; flex: none; margin-top: 2px; position: relative; }
.bar { height: 6px; border: 1px solid #888; outline: 0; }
.red { background: linear-gradient(90deg, #0a0000, #ff1010); }
.green { background: linear-gradient(90deg, #000a00, #10e020); }
.blue { background: linear-gradient(90deg, #000008, #1010ff); }
.track em { position: absolute; left: 0; top: 9px; width: 10px; height: 8px; background: #bbb; clip-path: polygon(50% 0, 100% 50%, 100% 100%, 0 100%, 0 50%); }
.val { width: 38px; height: 19px; margin-left: 6px; background: #484848; color: #6f6f6f; font-size: 12px; line-height: 20px; padding-left: 3px; flex: none; }
.spectrum { display: flex; height: 15px; }
.spec {
  width: 209px;
  background: linear-gradient(180deg, #fff 0%, transparent 45%, transparent 55%, #000 100%),
    linear-gradient(90deg, #e00 0%, #ee0 17%, #0a3 33%, #09d 50%, #028 67%, #d08 85%, #e01 100%);
}
.bw { width: 8px; background: linear-gradient(#fff 50%, #000 50%); }

.adjtitle { font-size: 12px; color: #a5a5a5; padding: 6px 0 0 10px; height: 22px; line-height: 16px; }
.adjrow { display: flex; justify-content: center; height: 27px; align-items: center; gap: 8px; padding-right: 34px; margin-top: 0; }
.ai { width: 16px; height: 16px; flex: none; }
.r1 { margin-top: 1px; }
.r2 { margin-top: 1px; }

.lrow { display: flex; align-items: center; flex: none; border-bottom: 1px solid #404040; padding-left: 5px; position: relative; }
.filter { height: 28px; padding-top: 2px; }
.mode { height: 28px; padding-top: 2px; }
.lock { height: 29px; padding-top: 1px; }
.sel { height: 19px; background: #5b5b5b; border: 1px solid #464646; border-radius: 2px; display: flex; align-items: center; color: #9b9b9b; position: relative; font-size: 12px; flex: none; }
.sel-filter { width: 69px; padding-left: 6px; gap: 3px; }
.sel-mode { width: 109px; padding-left: 7px; }
.updown { position: absolute; right: 4px; top: 4px; width: 6px; height: 9px; }
.updown::before, .updown::after { content: ""; position: absolute; left: 0; border: 3px solid transparent; }
.updown::before { top: -3px; border-bottom-color: #aaa; }
.updown::after { bottom: -3px; border-top-color: #aaa; }
.f-icons { display: grid; grid-template-columns: repeat(5, 24px); justify-items: center; align-items: center; margin-left: 16px; width: 120px; flex: none; }
.f-t { font: bold 13px/1 "Liberation Serif", serif; color: #999; }
.f-toggle { width: 8px; height: 17px; margin-left: 17px; flex: none; background: linear-gradient(#5a5a5a 50%, #404040 50%); }
.l-lab { color: #9a9a9a; font-size: 12px; white-space: nowrap; flex: none; }
.lab-op { margin-left: 9px; width: 58px; }
.lab-lock { margin-left: 2px; width: 30px; }
.lab-fill { margin-left: 23px; width: 34px; }
.pct { width: 54px; height: 20px; display: flex; flex: none; background: #4a4a4a; position: absolute; right: 5px; top: 3px; }
.pct span { width: 35px; font-size: 11px; line-height: 20px; color: #6c6c6c; padding-left: 2px; }
.pct i { width: 19px; background: #5f5f5f; position: relative; }
.pct i::after { content: ""; position: absolute; left: 6px; top: 8px; border: 3px solid transparent; border-top-color: #aaa; }
.lock-icons { display: flex; align-items: center; gap: 8px; margin-left: 5px; width: 81px; flex: none; }
.layerlist { flex: 1; display: flex; min-height: 0; }
.layers { width: 225px; flex: none; }
.layerscroll { flex: 1; background: #474747; }
.layer { height: 39px; display: flex; align-items: center; border-bottom: 1px solid #3e3e3e; position: relative; }
.layer.second { height: 41px; }
.eye { width: 31px; height: 100%; display: flex; align-items: center; justify-content: center; border-right: 1px solid #3e3e3e; background: #535353; flex: none; }
.sel-layer { background: #667a96; }
.thumb { width: 30px; height: 31px; margin-left: 2px; background: #fff; border: 1px solid #111; flex: none; position: relative; }
.thumb.shape { background: repeating-conic-gradient(#bdbdbd 0 25%, #fff 0 50%) 0 0 / 10px 10px; }
.vec { position: absolute; right: -2px; bottom: -2px; width: 15px; height: 15px; background: #667a96; border: 1px solid #111; }
.br { position: absolute; width: 6px; height: 6px; border: 0 solid #fff; }
.tl { left: -3px; top: -3px; border-width: 1px 0 0 1px; }
.tr { right: -3px; top: -3px; border-width: 1px 1px 0 0; }
.bl { left: -3px; bottom: -3px; border-width: 0 0 1px 1px; }
.brr { right: -3px; bottom: -3px; border-width: 0 1px 1px 0; }
.lname { margin-left: 9px; color: #eef; font-size: 12px; white-space: nowrap; }
.lname.ital { margin-left: 10px; font-style: italic; color: #f2f2f2; }
.llock { position: absolute; left: 198px; top: 14px; }

/* watermarks */
.baidu { position: absolute; left: 832px; top: 815px; width: 58px; height: 110px; color: #c8c8c8; overflow: hidden; }
.ba { position: absolute; left: 4px; top: 22px; font: bold 44px/50px "Liberation Sans", sans-serif; white-space: nowrap; }
.jy { position: absolute; left: 3px; top: 66px; font: 26px/28px "Liberation Sans", sans-serif; white-space: nowrap; }
.aoe { position: absolute; left: 890px; top: 835px; width: 200px; height: 100px; background: #fff; display: flex; padding: 9px 0 0 3px; }
.aoe::before { content: ""; position: absolute; left: 27px; top: -16px; width: 14px; height: 18px; border-radius: 50%; background: #c9c9c9; box-shadow: 19px 0 0 #c9c9c9; }
.phoenix { margin-top: -3px; }
.aoe-r { margin-left: 3px; width: 144px; flex: none; }
.aoe-title { height: 56px; color: #1c1c1c; font: 700 29px/29px "Noto Sans CJK SC", sans-serif; white-space: nowrap; }
.aoe-title span { display: block; transform: scaleY(1.800); transform-origin: 0 0; margin-top: 1px; }
.aoe-url { background: #2f2f2f; color: #fff; height: 15px; margin-top: 11px; font: 11px/15px "Liberation Mono", monospace; letter-spacing: 5px; padding-left: 4px; white-space: nowrap; overflow: hidden; }
```
